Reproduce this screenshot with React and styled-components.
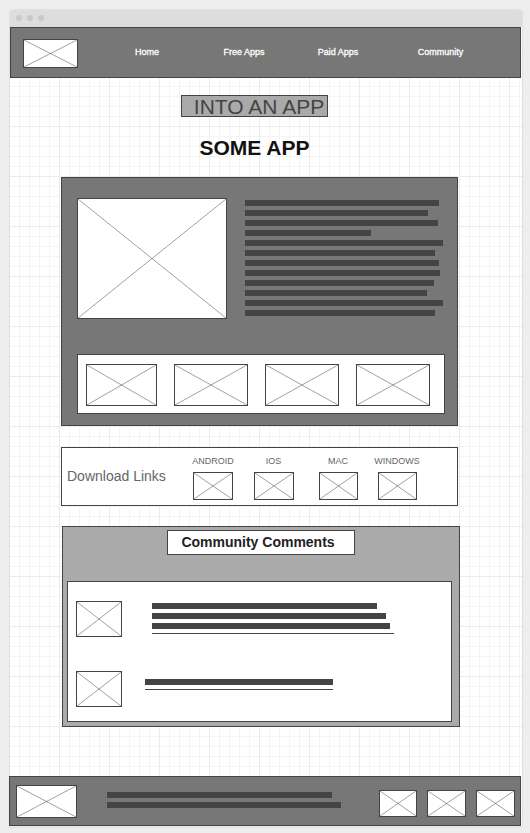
import React from "react";
import styled, { createGlobalStyle } from "styled-components";

const ink = "#444";
const slate = "#777";
const silver = "#aaa";

const GlobalStyle = createGlobalStyle`
  *, *::before, *::after { box-sizing: border-box; }
  body {
    margin: 0;
    background: #eee;
    color: #666;
    font-family: "Liberation Sans", Arial, sans-serif;
  }
  h1, h2, p, ul { margin: 0; padding: 0; }
  ul { list-style: none; }
  a { color: inherit; text-decoration: none; }
`;

const Window = styled.div`
  margin: 10px 8px 6px 10px;
  border-radius: 3px 3px 0 0;
  background-color: #fff;
  background-image:
    linear-gradient(90deg, #ececec 1px, transparent 1px),
    linear-gradient(#ececec 1px, transparent 1px),
    linear-gradient(90deg, #f4f4f4 1px, transparent 1px),
    linear-gradient(#f4f4f4 1px, transparent 1px);
  background-size: 50px 50px, 50px 50px, 10px 10px, 10px 10px;
  background-position: 49px 0, 0 16px, 9px 0, 0 6px;
  box-shadow: 0 0 2px rgba(0, 0, 0, 0.2);
`;

const TitleBar = styled.div`
  display: flex;
  align-items: center;
  gap: 5px;
  height: 17px;
  padding: 0 6px 1px;
  border-radius: 3px 3px 0 0;
  background: #ddd;
`;

const Dot = styled.span`
  width: 6px;
  height: 6px;
  border-radius: 50%;
  background: #c9c9c9;
`;

const Header = styled.header`
  display: flex;
  align-items: center;
  margin-right: 1px;
  padding: 11px 23px 9px 12px;
  border: 1px solid ${ink};
  background: ${slate};
`;

const Nav = styled.nav`
  flex: 1;
  display: grid;
  grid-template-columns: 98fr 96fr 92fr 113fr;
  margin: 0 0 4px 20px;
  justify-items: center;
`;

const NavLink = styled.a`
  color: #fff;
  font-size: 9px;
  line-height: 12px;
  white-space: nowrap;
  -webkit-text-stroke: 0.3px #fff;
`;

const Frame = styled.svg`
  display: block;
  flex: none;
  width: ${(p) => (p.$width ? `${p.$width}px` : "100%")};
  height: ${(p) => p.$height}px;
  border: 1px solid ${ink};
  background: #fff;
  line {
    stroke: ${ink};
    stroke-opacity: 0.5;
    vector-effect: non-scaling-stroke;
  }
`;

const Main = styled.main`
  padding: 17px 62px 49px 51px;
`;

const Intro = styled.div`
  display: flex;
  flex-direction: column;
  align-items: center;
  padding-right: 12px;
  text-align: center;
`;

const Tagline = styled.p`
  padding: 2px 3px 0 12px;
  border: 1px solid ${ink};
  background: ${silver};
  color: ${ink};
  font-size: 21px;
  line-height: 18px;
  white-space: nowrap;
`;

const AppName = styled.h1`
  margin-top: 19px;
  color: #111;
  font-size: 21px;
  line-height: 24px;
`;

const Hero = styled.section`
  margin: 17px 2px 0 0;
  padding: 20px 12px 11px 15px;
  border: 1px solid ${ink};
  background: ${slate};
`;

const HeroTop = styled.div`
  display: flex;
  gap: 18px;
  padding-right: 2px;
`;

const Lines = styled.div`
  flex: 1;
  display: flex;
  flex-direction: column;
  gap: 4px;
  padding-top: ${(p) => p.$top || 0}px;
`;

const Line = styled.span`
  width: min(100%, ${(p) => p.$width}px);
  height: ${(p) => (p.$thin ? 1 : 6)}px;
  background: ${ink};
`;

const Thumbs = styled.div`
  display: grid;
  grid-template-columns: 71fr 74fr 74fr 74fr;
  gap: 17px;
  margin-top: 35px;
  padding: 9px 14px 7px 8px;
  border: 1px solid ${ink};
  background: #fff;
`;

const Downloads = styled.section`
  display: flex;
  align-items: center;
  margin: 21px 2px 0 0;
  padding: 7px 34px 5px 5px;
  border: 1px solid ${ink};
  background: #fff;
`;

const DownloadTitle = styled.h2`
  width: 117px;
  padding-bottom: 3px;
  font-size: 14px;
  font-weight: 400;
  line-height: 16px;
`;

const Platforms = styled.ul`
  flex: 1;
  display: grid;
  grid-template-columns: 58fr 63fr 66fr 52fr;
`;

const PlatformLink = styled.a`
  display: flex;
  flex-direction: column;
  align-items: center;
  gap: 5px;
  font-size: 9px;
  line-height: 12px;
`;

const Community = styled.section`
  margin: 20px 0 0 1px;
  padding: 3px 4px 4px;
  border: 1px solid ${ink};
  background: ${silver};
`;

const CommunityTitle = styled.h2`
  width: fit-content;
  margin: 0 auto;
  padding: 0 19px 1px 13px;
  border: 1px solid ${ink};
  background: #fff;
  color: #222;
  font-size: 14px;
  line-height: 22px;
`;

const CommentList = styled.ul`
  display: flex;
  flex-direction: column;
  gap: 34px;
  && {
    margin: 26px 3px 0 0;
    padding: 19px 8px 14px;
  }
  border: 1px solid ${ink};
  background: #fff;
`;

const Comment = styled.li`
  display: flex;
  gap: ${(p) => p.$gap}px;
`;

const Footer = styled.footer`
  display: flex;
  align-items: center;
  margin: 0 1px 0 -1px;
  padding: 8px 5px 7px 6px;
  border: 1px solid ${ink};
  background: ${slate};
`;

const FooterText = styled.div`
  flex: 1;
  margin: 0 38px 4px 30px;
`;

const FooterIcons = styled.div`
  display: flex;
  gap: 10px;
  padding-top: 4px;
`;

const Bottom = styled.div`
  height: 1px;
`;

function Picture({ label, width, height }) {
  return (
    <Frame
      $width={width}
      $height={height}
      viewBox="0 0 100 100"
      preserveAspectRatio="none"
      role="img"
      aria-label={label}
    >
      <line x1="0" y1="0" x2="100" y2="100" />
      <line x1="0" y1="100" x2="100" y2="0" />
    </Frame>
  );
}

const heroLines = [194, 183, 193, 126, 198, 190, 194, 195, 189, 182, 198, 190];
const navItems = ["Home", "Free Apps", "Paid Apps", "Community"];
const platforms = [
  { name: "ANDROID", width: 40 },
  { name: "IOS", width: 40 },
  { name: "MAC", width: 39 },
  { name: "WINDOWS", width: 39 },
];
const comments = [
  { gap: 30, top: 2, lines: [225, 234, 238], rule: 242 },
  { gap: 23, top: 8, lines: [188], rule: 188 },
];

export default function App() {
  return (
    <>
      <GlobalStyle />
      <Window>
        <TitleBar>
          <Dot />
          <Dot />
          <Dot />
        </TitleBar>
        <Header>
          <Picture label="Logo" width={55} height={29} />
          <Nav>
            {navItems.map((item) => (
              <NavLink key={item} href="#">{item}</NavLink>
            ))}
          </Nav>
        </Header>
        <Main>
          <Intro>
            <Tagline>INTO AN APP</Tagline>
            <AppName>SOME APP</AppName>
          </Intro>
          <Hero>
            <HeroTop>
              <Picture label="App preview" width={150} height={121} />
              <Lines $top={2}>
                {heroLines.map((width, i) => (
                  <Line key={i} $width={width} />
                ))}
              </Lines>
            </HeroTop>
            <Thumbs>
              {[1, 2, 3, 4].map((n) => (
                <Picture key={n} label={`Screenshot ${n}`} height={42} />
              ))}
            </Thumbs>
          </Hero>
          <Downloads>
            <DownloadTitle>Download Links</DownloadTitle>
            <Platforms>
              {platforms.map(({ name, width }) => (
                <li key={name}>
                  <PlatformLink href="#">
                    {name}
                    <Picture label={name} width={width} height={28} />
                  </PlatformLink>
                </li>
              ))}
            </Platforms>
          </Downloads>
          <Community>
            <CommunityTitle>Community Comments</CommunityTitle>
            <CommentList>
              {comments.map((comment, i) => (
                <Comment key={i} $gap={comment.gap}>
                  <Picture label="Avatar" width={46} height={36} />
                  <Lines $top={comment.top}>
                    {comment.lines.map((width) => (
                      <Line key={width} $width={width} />
                    ))}
                    <Line $thin $width={comment.rule} />
                  </Lines>
                </Comment>
              ))}
            </CommentList>
          </Community>
        </Main>
        <Footer>
          <Picture label="Footer logo" width={61} height={33} />
          <FooterText>
            <Lines>
              <Line $width={225} />
              <Line $width={234} />
            </Lines>
          </FooterText>
          <FooterIcons>
            <Picture label="Social link 1" width={38} height={27} />
            <Picture label="Social link 2" width={39} height={27} />
            <Picture label="Social link 3" width={39} height={27} />
          </FooterIcons>
        </Footer>
        <Bottom />
      </Window>
    </>
  );
}
